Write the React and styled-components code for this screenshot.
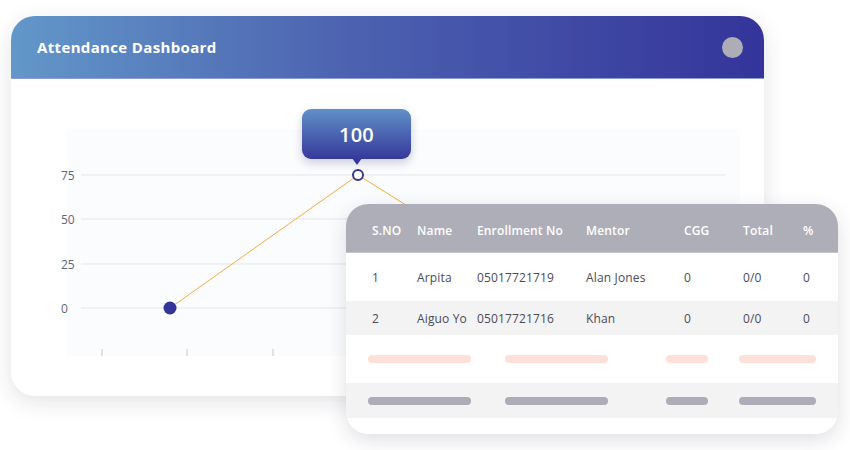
import styled, { createGlobalStyle } from "styled-components";

const GlobalStyle = createGlobalStyle`
  body {
    margin: 0;
    background: #ffffff;
    font-family: "Open Sans", "Liberation Sans", sans-serif;
  }
`;

const Stage = styled.div`
  position: relative;
  width: 850px;
  height: 450px;
  padding: 16px 0 0 11px;
  box-sizing: border-box;
  overflow: hidden;
`;

const DashboardCard = styled.div`
  width: 753px;
  height: 380px;
  border-radius: 24px;
  background: #ffffff;
  box-shadow: 0 6px 22px rgba(40, 40, 70, 0.13);
  overflow: hidden;
  display: flex;
  flex-direction: column;
`;

const Header = styled.div`
  height: 62px;
  flex-shrink: 0;
  display: flex;
  align-items: center;
  justify-content: space-between;
  padding: 0 21px 0 26px;
  background: linear-gradient(90deg, #6297c9 0%, #4c62b0 45%, #34349a 100%);
  border-bottom: 1px solid #8d9bd8;
`;

const Title = styled.h1`
  margin: 0;
  color: #ffffff;
  font-size: 15px;
  font-weight: 700;
  letter-spacing: 0.35px;
`;

const Dot = styled.span`
  width: 21px;
  height: 21px;
  border-radius: 50%;
  background: #adadb8;
`;

const Body = styled.div`
  flex: 1;
  padding: 50px 0 0 39px;
`;

const Chart = styled.div`
  position: relative;
  width: 695px;
  height: 227px;
`;

const Tooltip = styled.div`
  position: absolute;
  left: 252px;
  top: -20px;
  width: 109px;
  height: 50px;
  border-radius: 9px;
  background: linear-gradient(180deg, #6190c8 0%, #36399b 100%);
  box-shadow: 0 4px 10px rgba(40, 40, 90, 0.22);
  display: flex;
  align-items: center;
  justify-content: center;
  color: #ffffff;
  font-size: 20px;
  font-weight: 600;
  letter-spacing: 0.3px;

  &::after {
    content: "";
    position: absolute;
    left: 50%;
    bottom: -6px;
    margin-left: -5px;
    border-left: 5px solid transparent;
    border-right: 5px solid transparent;
    border-top: 7px solid #36399b;
  }
`;

const TableCard = styled.div`
  position: absolute;
  left: 346px;
  top: 204px;
  width: 492px;
  height: 230px;
  border-radius: 22px;
  background: #ffffff;
  box-shadow: 0 6px 20px rgba(40, 40, 70, 0.15);
  overflow: hidden;
`;

const Row = styled.div`
  display: grid;
  grid-template-columns: 45px 60px 109px 98px 59px 60px 1fr;
  align-items: center;
  padding-left: 26px;
  height: ${(p) => p.$h}px;
  background: ${(p) => p.$bg || "#ffffff"};
  color: ${(p) => (p.$head ? "#ffffff" : "#4b4b57")};
  font-size: 12px;
  font-weight: ${(p) => (p.$head ? 600 : 400)};
  letter-spacing: 0.15px;
  white-space: nowrap;
  box-sizing: border-box;
  ${(p) => p.$head && "border-bottom: 1px solid #c6c6ce;"}
`;

const Cell = styled.span`
  padding-top: ${(p) => p.$shift || 0}px;
`;

const BarRow = styled.div`
  display: flex;
  align-items: center;
  padding-left: 22px;
  height: ${(p) => p.$h}px;
  background: ${(p) => p.$bg || "#ffffff"};
`;

const Bar = styled.span`
  width: ${(p) => p.$w}px;
  margin-left: ${(p) => p.$gap || 0}px;
  height: 8px;
  border-radius: 4px;
  background: ${(p) => p.$color};
`;

const heads = ["S.NO", "Name", "Enrollment No", "Mentor", "CGG", "Total", "%"];
const rows = [
  ["1", "Arpita", "05017721719", "Alan Jones", "0", "0/0", "0"],
  ["2", "Aiguo Yo", "05017721716", "Khan", "0", "0/0", "0"],
];
const bars = [
  { w: 103, gap: 0 },
  { w: 103, gap: 34 },
  { w: 42, gap: 58 },
  { w: 77, gap: 31 },
];

const LineChart = () => {
  const grid = [
    { v: "75", y: 46 },
    { v: "50", y: 90 },
    { v: "25", y: 135 },
    { v: "0", y: 179 },
  ];
  const ticks = [52, 137, 223, 308, 394, 479, 565, 650];
  return (
    <svg width="695" height="227" viewBox="0 0 695 227">
      <rect x="17" y="0" width="673" height="227" fill="#fbfcfe" />
      {grid.map((g) => (
        <g key={g.v}>
          <line x1="31" x2="675" y1={g.y} y2={g.y} stroke="#e3e5ea" strokeWidth="1" />
          <text
            x="11"
            y={g.y + 5}
            fontSize="12"
            fontWeight="500"
            fill="#5b6680"
            fontFamily="Open Sans, Liberation Sans, sans-serif"
          >
            {g.v}
          </text>
        </g>
      ))}
      {ticks.map((x) => (
        <line key={x} x1={x} x2={x} y1="220" y2="227" stroke="#c3c7d0" strokeWidth="1" />
      ))}
      <polyline
        points="120,179 308,46 450,135"
        fill="none"
        stroke="#f5ad3b"
        strokeWidth="1"
      />
      <circle cx="120" cy="179" r="6.5" fill="#33359a" />
      <circle cx="308" cy="46" r="5" fill="#ffffff" stroke="#33359a" strokeWidth="2" />
    </svg>
  );
};

export default function App() {
  return (
    <Stage>
      <GlobalStyle />
      <DashboardCard>
        <Header>
          <Title>Attendance Dashboard</Title>
          <Dot />
        </Header>
        <Body>
          <Chart>
            <LineChart />
            <Tooltip>100</Tooltip>
          </Chart>
        </Body>
      </DashboardCard>

      <TableCard>
        <Row $head $h={49} $bg="#aeaeb8">
          {heads.map((h) => (
            <Cell key={h} $shift={4}>
              {h}
            </Cell>
          ))}
        </Row>
        {rows.map((r, i) => (
          <Row key={r[0]} $h={i === 0 ? 48 : 34} $bg={i === 0 ? "#ffffff" : "#f3f3f4"}>
            {r.map((c, j) => (
              <Cell key={j} $shift={i === 0 ? 1 : 0}>
                {c}
              </Cell>
            ))}
          </Row>
        ))}
        <BarRow $h={48}>
          {bars.map((b, i) => (
            <Bar key={i} $w={b.w} $gap={b.gap} $color="#fde0d7" />
          ))}
        </BarRow>
        <BarRow $h={35} $bg="#f3f3f4">
          {bars.map((b, i) => (
            <Bar key={i} $w={b.w} $gap={b.gap} $color="#adadb7" />
          ))}
        </BarRow>
      </TableCard>
    </Stage>
  );
}
